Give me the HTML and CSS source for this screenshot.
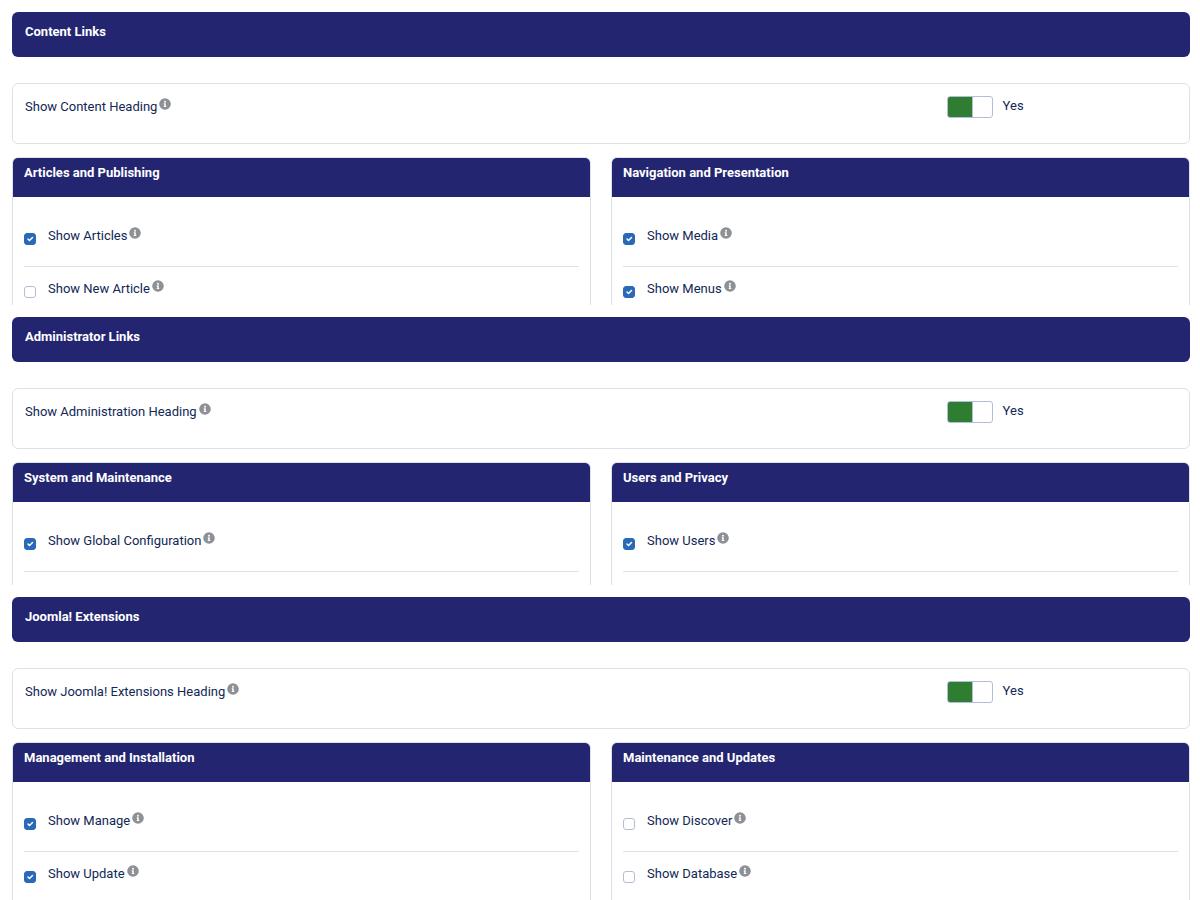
FILE: index.html
```html
<!DOCTYPE html>
<html lang="en">
<head>
  <meta charset="UTF-8" />
  <title>Menu Links Settings</title>
  <meta name="viewport" content="width=device-width, initial-scale=1.0" />
  <link rel="stylesheet" href="styles.css">
</head>
<body>

  <!-- shared icon -->
  <svg class="sprite" aria-hidden="true">
    <symbol id="info" viewBox="0 0 512 512">
      <path fill="currentColor" fill-rule="evenodd" d="M256 8a248 248 0 1 0 0 496a248 248 0 1 0 0-496zm0 110a42 42 0 1 1 0 84a42 42 0 1 1 0-84zm56 254a12 12 0 0 1-12 12h-88a12 12 0 0 1-12-12v-24a12 12 0 0 1 12-12h12v-64h-12a12 12 0 0 1-12-12v-24a12 12 0 0 1 12-12h64a12 12 0 0 1 12 12v100h12a12 12 0 0 1 12 12z"/>
    </symbol>
  </svg>

  <form class="settings">

    <section class="group">
      <h2 class="group-title">Content Links</h2>
      <div class="heading-option">
        <label for="content_heading">Show Content Heading<svg class="info"><use href="#info"/></svg></label>
        <div class="switch">
          <input type="checkbox" id="content_heading" checked />
          <label for="content_heading">Yes</label>
        </div>
      </div>
      <div class="panels">
        <div class="panel">
          <h3 class="panel-title">Articles and Publishing</h3>
          <ul class="options">
            <li>
              <input type="checkbox" id="articles" checked />
              <label for="articles">Show Articles<svg class="info"><use href="#info"/></svg></label>
            </li>
            <li>
              <input type="checkbox" id="new_article" />
              <label for="new_article">Show New Article<svg class="info"><use href="#info"/></svg></label>
            </li>
          </ul>
        </div>
        <div class="panel">
          <h3 class="panel-title">Navigation and Presentation</h3>
          <ul class="options">
            <li>
              <input type="checkbox" id="media" checked />
              <label for="media">Show Media<svg class="info"><use href="#info"/></svg></label>
            </li>
            <li>
              <input type="checkbox" id="menus" checked />
              <label for="menus">Show Menus<svg class="info"><use href="#info"/></svg></label>
            </li>
          </ul>
        </div>
      </div>
    </section>

    <section class="group">
      <h2 class="group-title">Administrator Links</h2>
      <div class="heading-option">
        <label for="admin_heading">Show Administration Heading<svg class="info"><use href="#info"/></svg></label>
        <div class="switch">
          <input type="checkbox" id="admin_heading" checked />
          <label for="admin_heading">Yes</label>
        </div>
      </div>
      <div class="panels">
        <div class="panel">
          <h3 class="panel-title">System and Maintenance</h3>
          <ul class="options single">
            <li>
              <input type="checkbox" id="global_config" checked />
              <label for="global_config">Show Global Configuration<svg class="info"><use href="#info"/></svg></label>
            </li>
          </ul>
        </div>
        <div class="panel">
          <h3 class="panel-title">Users and Privacy</h3>
          <ul class="options single">
            <li>
              <input type="checkbox" id="users" checked />
              <label for="users">Show Users<svg class="info"><use href="#info"/></svg></label>
            </li>
          </ul>
        </div>
      </div>
    </section>

    <section class="group">
      <h2 class="group-title">Joomla! Extensions</h2>
      <div class="heading-option">
        <label for="ext_heading">Show Joomla! Extensions Heading<svg class="info"><use href="#info"/></svg></label>
        <div class="switch">
          <input type="checkbox" id="ext_heading" checked />
          <label for="ext_heading">Yes</label>
        </div>
      </div>
      <div class="panels">
        <div class="panel">
          <h3 class="panel-title">Management and Installation</h3>
          <ul class="options">
            <li>
              <input type="checkbox" id="manage" checked />
              <label for="manage">Show Manage<svg class="info"><use href="#info"/></svg></label>
            </li>
            <li>
              <input type="checkbox" id="update" checked />
              <label for="update">Show Update<svg class="info"><use href="#info"/></svg></label>
            </li>
          </ul>
        </div>
        <div class="panel">
          <h3 class="panel-title">Maintenance and Updates</h3>
          <ul class="options">
            <li>
              <input type="checkbox" id="discover" />
              <label for="discover">Show Discover<svg class="info"><use href="#info"/></svg></label>
            </li>
            <li>
              <input type="checkbox" id="database" />
              <label for="database">Show Database<svg class="info"><use href="#info"/></svg></label>
            </li>
          </ul>
        </div>
      </div>
    </section>

  </form>

</body>
</html>
```
FILE: styles.css
```css
:root {
  --navy: #232571;
  --text: #112855;
  --border: #dfe1e8;
  --control: #b3bed6;
  --blue: #2a69b8;
  --green: #2f7d32;
  --icon: #8d9095;
}

* {
  box-sizing: border-box;
}

body {
  margin: 0;
  background: #fff;
  color: var(--text);
  font-family: Roboto, "Liberation Sans", sans-serif;
  font-size: 13px;
  line-height: 20px;
}

.sprite {
  display: none;
}

.settings {
  display: flex;
  flex-direction: column;
  gap: 12px;
  min-height: 100vh;
  padding: 12px 10px 0 12px;
}

.group {
  display: flex;
  flex-direction: column;
}

.group:last-child {
  flex: 1;
}

.group-title,
.panel-title {
  margin: 0;
  background: var(--navy);
  color: #fff;
  font-size: 13px;
  font-weight: 700;
}

.group-title {
  padding: 10px 13px 15px;
  border-radius: 6px;
}

/* yes/no row under each title */
.heading-option {
  display: grid;
  grid-template-columns: 4fr 1fr;
  margin: 26px 0 13px;
  padding: 12px 12px 25px;
  border: 1px solid var(--border);
  border-radius: 6px;
}

.heading-option > label {
  padding-top: 1px;
}

.switch {
  display: flex;
  align-items: flex-start;
  gap: 10px;
}

.switch input {
  appearance: none;
  width: 46px;
  height: 22px;
  margin: 0;
  border: 1px solid var(--control);
  border-radius: 3px;
  background: linear-gradient(to right, #fff 24px, var(--green) 24px);
}

.switch input:checked {
  background: linear-gradient(to right, var(--green) 24px, var(--control) 24px, var(--control) 25px, #fff 25px);
}

.panels {
  display: grid;
  grid-template-columns: 1fr 1fr;
  gap: 20px;
  flex: 1;
}

.panel {
  border: 1px solid var(--border);
  border-bottom: none;
  border-radius: 6px 6px 0 0;
}

.panel-title {
  padding: 5px 11px 14px;
  border-radius: 5px 5px 0 0;
}

.options {
  list-style: none;
  margin: 0;
  padding: 17px 11px 0;
}

.options li {
  display: flex;
  align-items: flex-start;
  gap: 12px;
  padding: 12px 0 20px;
  border-bottom: 1px solid var(--border);
}

.options li:last-child {
  padding-bottom: 6px;
  border-bottom: none;
}

.options.single {
  padding-bottom: 13px;
}

.options.single li {
  padding-bottom: 20px;
  border-bottom: 1px solid var(--border);
}

.options input {
  appearance: none;
  width: 12px;
  height: 12px;
  margin: 7px 0 0;
  border: 1px solid var(--control);
  border-radius: 3px;
}

.options input:checked {
  border-color: var(--blue);
  background: var(--blue) url("data:image/svg+xml,%3Csvg xmlns='http://www.w3.org/2000/svg' viewBox='0 0 20 20'%3E%3Cpath fill='none' stroke='%23fff' stroke-linecap='round' stroke-linejoin='round' stroke-width='3' d='m6 10 3 3 6-6'/%3E%3C/svg%3E") center / contain no-repeat;
}

.info {
  width: 12px;
  height: 12px;
  margin-left: 2px;
  color: var(--icon);
  vertical-align: 1px;
}

@media (max-width: 600px) {
  .panels,
  .heading-option {
    grid-template-columns: 1fr;
  }
}
```
